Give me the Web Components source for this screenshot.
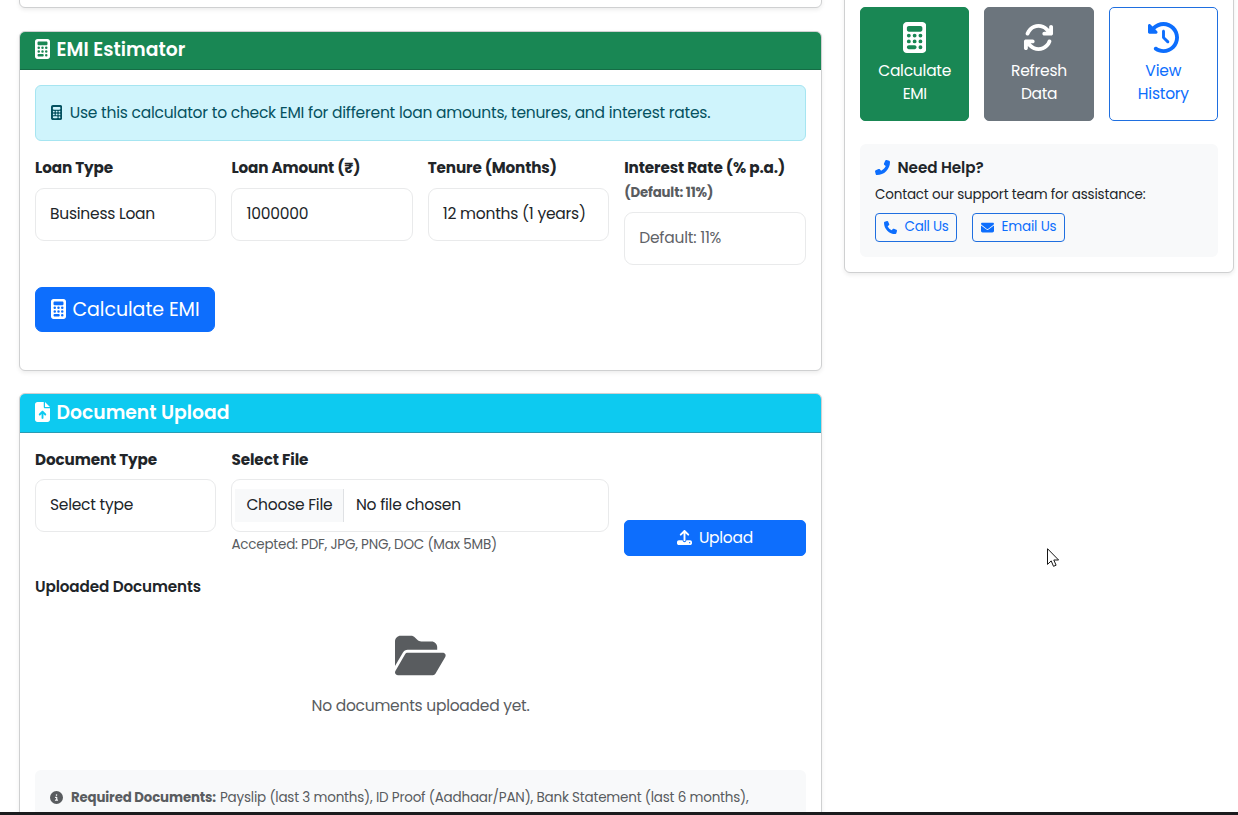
<!DOCTYPE html>
<html lang="en">
<head>
<meta charset="utf-8">
<title>Loan dashboard</title>
<style>
html,body{margin:0;height:815px;overflow:hidden;background:#fff}
body{font-family:Poppins,Inter,"Noto Sans",sans-serif;font-size:15.5px;color:#212529}
</style>
</head>
<body>
<loan-dashboard></loan-dashboard>
<script>
const ICONS={
calc:[384,'M64 0C28.7 0 0 28.7 0 64V448c0 35.3 28.7 64 64 64H320c35.3 0 64-28.7 64-64V64c0-35.3-28.7-64-64-64H64zM96 64H288c17.7 0 32 14.3 32 32v32c0 17.7-14.3 32-32 32H96c-17.7 0-32-14.3-32-32V96c0-17.7 14.3-32 32-32zm32 160a32 32 0 1 1 -64 0 32 32 0 1 1 64 0zM96 352a32 32 0 1 1 0-64 32 32 0 1 1 0 64zM64 416c0-17.7 14.3-32 32-32h96c17.7 0 32 14.3 32 32s-14.3 32-32 32H96c-17.7 0-32-14.3-32-32zM192 256a32 32 0 1 1 0-64 32 32 0 1 1 0 64zm32 64a32 32 0 1 1 -64 0 32 32 0 1 1 64 0zm64-64a32 32 0 1 1 0-64 32 32 0 1 1 0 64zm32 64a32 32 0 1 1 -64 0 32 32 0 1 1 64 0zM288 448a32 32 0 1 1 0-64 32 32 0 1 1 0 64z'],
refresh:[512,'M105.1 202.6c7.7-21.8 20.2-42.3 37.8-59.8c62.5-62.5 163.8-62.5 226.3 0L386.3 160H352c-17.7 0-32 14.3-32 32s14.3 32 32 32H463.5h.4c17.7 0 32-14.3 32-32V80c0-17.7-14.3-32-32-32s-32 14.3-32 32v35.2L414.4 97.6c-87.5-87.5-229.3-87.5-316.8 0C73.2 122 55.6 150.7 44.8 181.4c-5.9 16.7 2.9 34.9 19.5 40.8s34.9-2.9 40.8-19.5zM39 289.3c-5 1.5-9.8 4.2-13.7 8.2c-4 4-6.7 8.8-8.1 14c-.3 1.2-.6 2.5-.8 3.8c-.3 1.7-.4 3.4-.4 5.1V432c0 17.7 14.3 32 32 32s32-14.3 32-32V396.9l17.6 17.5 0 0c87.5 87.4 229.3 87.4 316.7 0c24.4-24.4 42.1-53.1 52.9-83.7c5.9-16.7-2.9-34.9-19.5-40.8s-34.9 2.9-40.8 19.5c-7.7 21.8-20.2 42.3-37.8 59.8c-62.5 62.5-163.8 62.5-226.3 0l-.1-.1L125.6 352H160c17.7 0 32-14.3 32-32s-14.3-32-32-32H48.4c-1.6 0-3.2 .1-4.8 .3s-3.1 .5-4.6 1z'],
history:[512,'M75 75L41 41C25.9 25.9 0 36.6 0 57.9V168c0 13.3 10.7 24 24 24H134.1c21.4 0 32.1-25.9 17-41l-30.8-30.8C155 85.5 203 64 256 64c106 0 192 86 192 192s-86 192-192 192c-40.8 0-78.6-12.7-109.7-34.4c-14.5-10.1-34.4-6.6-44.6 7.9s-6.6 34.4 7.9 44.6C151.2 495 201.7 512 256 512c141.4 0 256-114.6 256-256S397.4 0 256 0C185.3 0 121.3 28.7 75 75zm181 53c-13.3 0-24 10.7-24 24V256c0 6.4 2.5 12.5 7 17l72 72c9.4 9.4 24.6 9.4 33.9 0s9.4-24.6 0-33.9l-65-65V152c0-13.3-10.7-24-24-24z'],
mail:[512,'M48 64C21.5 64 0 85.5 0 112c0 15.1 7.1 29.3 19.2 38.4L236.8 313.6c11.4 8.5 27 8.5 38.4 0L492.8 150.4c12.1-9.1 19.2-23.3 19.2-38.4c0-26.5-21.5-48-48-48H48zM0 176V384c0 35.3 28.7 64 64 64H448c35.3 0 64-28.7 64-64V176L294.4 339.2c-22.8 17.1-54 17.1-76.8 0L0 176z'],
phone:[512,'M164.9 24.6c-7.7-18.6-28-28.5-47.4-23.2l-88 24C12.1 30.2 0 46 0 64C0 311.4 200.6 512 448 512c18 0 33.8-12.1 38.6-29.5l24-88c5.3-19.4-4.6-39.7-23.2-47.4l-96-40c-16.3-6.8-35.2-2.1-46.3 11.6L304.7 368C234.3 334.7 177.3 277.7 144 207.3L193.3 167c13.7-11.2 18.4-30 11.6-46.3l-40-96z'],
file:[384,'M64 0C28.7 0 0 28.7 0 64V448c0 35.3 28.7 64 64 64H320c35.3 0 64-28.7 64-64V160H256c-17.7 0-32-14.3-32-32V0H64zM256 0V128H384L256 0zM216 408c0 13.3-10.7 24-24 24s-24-10.7-24-24V305.9l-31 31c-9.4 9.4-24.6 9.4-33.9 0s-9.4-24.6 0-33.9l72-72c9.4-9.4 24.6-9.4 33.9 0l72 72c9.4 9.4 9.4 24.6 0 33.9s-24.6 9.4-33.9 0l-31-31V408z'],
upload:[512,'M288 109.3V352c0 17.7-14.3 32-32 32s-32-14.3-32-32V109.3l-73.4 73.4c-12.5 12.5-32.8 12.5-45.3 0s-12.5-32.8 0-45.3l128-128c12.5-12.5 32.8-12.5 45.3 0l128 128c12.5 12.5 12.5 32.8 0 45.3s-32.8 12.5-45.3 0L288 109.3zM64 352H192c0 35.3 28.7 64 64 64s64-28.7 64-64H448c35.3 0 64 28.7 64 64v32c0 35.3-28.7 64-64 64H64c-35.3 0-64-28.7-64-64V416c0-35.3 28.7-64 64-64zM432 456a24 24 0 1 0 0-48 24 24 0 1 0 0 48z'],
info:[512,'M256 512A256 256 0 1 0 256 0a256 256 0 1 0 0 512zM216 336h24V272H216c-13.3 0-24-10.7-24-24s10.7-24 24-24h48c13.3 0 24 10.7 24 24v88h8c13.3 0 24 10.7 24 24s-10.7 24-24 24H216c-13.3 0-24-10.7-24-24s10.7-24 24-24zm40-208a32 32 0 1 1 0 64 32 32 0 1 1 0-64z'],
folder:[576,'M88.7 223.8L0 375.8V96C0 60.7 28.7 32 64 32H181.5c17 0 33.3 6.7 45.3 18.7l26.5 26.5c12 12 28.3 18.7 45.3 18.7H416c35.3 0 64 28.7 64 64v32H144c-22.8 0-43.8 12.1-55.3 31.8zm27.6 16.1C122.1 230 132.6 224 144 224H544c11.5 0 22 6.1 27.7 16.1s5.7 22.2-.1 32.1l-112 192C453.9 474 443.4 480 432 480H32c-11.5 0-22-6.1-27.7-16.1s-5.7-22.2 .1-32.1l112-192z']
};
const def=(name,html,init)=>customElements.define(name,class extends HTMLElement{
  connectedCallback(){
    if(this.shadowRoot)return;
    this.attachShadow({mode:'open'}).innerHTML=typeof html==='function'?html(this):html;
    if(init)init(this);
  }
});
const at=(e,n,d='')=>e.getAttribute(n)??d;

/* Icon: name, size (height in px), optional flip */
def('ui-icon',e=>{const [w,d]=ICONS[at(e,'name')],s=+at(e,'size',16);
  return `<style>:host{display:block;flex:none;line-height:0}svg{display:block;fill:currentColor}:host([flip]) svg{transform:scaleX(-1)}</style><svg width="${s*w/512}" height="${s}" viewBox="0 0 ${w} 512"><path d="${d}"/></svg>`;});

/* Single line of text, tracked so that it fills the width w */
def('ui-text','<style>:host{display:block;flex:none;white-space:nowrap}span{display:inline-block}</style><span><slot></slot></span>',e=>{
  const w=+at(e,'w',0);if(!w)return;
  const s=e.shadowRoot.querySelector('span'),n=e.textContent.length;
  s.style.letterSpacing=(w-s.getBoundingClientRect().width)/n+'px';
  e.style.width=w+'px';
});

def('ui-card',`<style>
:host{display:block;box-sizing:border-box;border:1px solid #cfd0d1;border-radius:6px;background:#fff;box-shadow:0 2px 4px rgba(0,0,0,.075)}
header{display:flex;align-items:center;box-sizing:border-box;height:var(--hh,38px);padding:0 15px 2px;gap:6.5px;background:var(--head);color:#fff;font-size:18.75px;font-weight:600;border-radius:5px 5px 0 0;border-bottom:1px solid var(--line)}
header ::slotted(ui-icon){margin-bottom:1px}
:host([plain]) header{display:none}
.body{padding:var(--pad,15px)}
</style><header><slot name="head"></slot></header><div class="body"><slot></slot></div>`);

def('ui-field',`<style>
:host{display:block}
.label{font-size:15.2px;font-weight:700;height:24px;line-height:24px}
.hint{display:block;font-weight:700;font-size:13.3px;color:#595c5f}
.hint ::slotted(*){line-height:22px;padding-top:2px}
.box{display:flex;align-items:center;box-sizing:border-box;height:53px;margin-top:var(--gap,8px);padding:0 14px 2px;border:1px solid #e9eaeb;border-radius:9px}
:host([muted]) .box{color:#5f6368}
</style><div class="label"><slot name="label"></slot></div><div class="hint"><slot name="hint"></slot></div><div class="box"><slot></slot></div>`);

def('ui-button',`<style>
:host{display:flex;align-items:center;justify-content:center;box-sizing:border-box;background:var(--bg,#0d6efd);color:var(--fg,#fff);border:1px solid var(--bd,var(--bg,#0d6efd));border-radius:var(--r,5px);gap:7px}
:host([tile]){flex-direction:column;justify-content:flex-start;gap:0;height:114px;padding-top:14px;line-height:23px}
:host([tile]) ::slotted(ui-icon){margin-bottom:6px}
:host([small]){height:29px;font-size:13.5px;gap:8px;--bg:transparent;--fg:#0d6efd;--bd:#1f6fe0;--r:4px;padding-bottom:1px}
</style><slot></slot>`);

def('emi-card',`<style>
:host{display:block}
ui-card{height:340px;--head:#198754;--line:#156c45}
.alert{display:flex;align-items:center;gap:7.5px;box-sizing:border-box;height:56px;padding:0 15px 1px;background:#cff4fc;border:1px solid #a6e5f1;border-radius:6px;color:#055160}
.grid{display:grid;grid-template-columns:repeat(4,181.4px);gap:15px;margin-top:15px;align-items:start}
ui-button{width:180px;height:45px;margin-top:22px;font-size:19px;--r:7px;padding-bottom:1px}
</style>
<ui-card>
<ui-icon slot="head" name="calc" size="20"></ui-icon><ui-text slot="head" w="129">EMI Estimator</ui-text>
<div class="alert"><ui-icon name="calc" size="15"></ui-icon><ui-text w="640.5">Use this calculator to check EMI for different loan amounts, tenures, and interest rates.</ui-text></div>
<div class="grid">
<ui-field><ui-text slot="label" w="78">Loan Type</ui-text><ui-text w="105">Business Loan</ui-text></ui-field>
<ui-field><ui-text slot="label" w="129">Loan Amount (₹)</ui-text><ui-text w="62">1000000</ui-text></ui-field>
<ui-field><ui-text slot="label" w="129">Tenure (Months)</ui-text><ui-text w="143">12 months (1 years)</ui-text></ui-field>
<ui-field muted><ui-text slot="label" w="161">Interest Rate (% p.a.)</ui-text><ui-text slot="hint" w="89">(Default: 11%)</ui-text><ui-text w="82">Default: 11%</ui-text></ui-field>
</div>
<ui-button><ui-icon name="calc" size="20"></ui-icon><ui-text w="127">Calculate EMI</ui-text></ui-button>
</ui-card>`);

def('document-card',`<style>
:host{display:block}
ui-card{height:480px;--head:#0dcaf0;--line:#2a9bb3;--hh:39px}
.grid{display:grid;grid-template-columns:181.4px 377.8px 181.4px;gap:15px;align-items:end}
ui-field{--gap:7px;align-self:start}
.choose{display:flex;align-items:center;box-sizing:border-box;height:33px;padding:0 11px 2px;background:#f8f9fa;border-right:1px solid #dfe1e4;margin:1px 11.5px 0 -11px}
.note{font-size:13.5px;line-height:22px;padding-top:2px;color:#595c5f}
.upload{height:36px;padding-bottom:1px}
h6{margin:19px 0 0;font-size:15.2px;font-weight:600;line-height:24px}
.empty{display:flex;flex-direction:column;align-items:center;margin-top:34px;color:#595c5f}
.empty ui-text{line-height:24px;margin-top:15px}
.req{display:flex;gap:8px;align-items:center;box-sizing:border-box;height:80px;margin-top:52px;padding:0 15px 25px;background:#f8f9fa;border-radius:6px;color:#595c5f;font-size:13.5px}
.req ui-text+ui-text{margin-left:-4px}
</style>
<ui-card>
<ui-icon slot="head" name="file" size="20"></ui-icon><ui-text slot="head" w="173">Document Upload</ui-text>
<div class="grid">
<ui-field><ui-text slot="label" w="122">Document Type</ui-text><ui-text w="83">Select type</ui-text></ui-field>
<div><ui-field><ui-text slot="label" w="77">Select File</ui-text><div class="choose"><ui-text w="86">Choose File</ui-text></div><ui-text w="105">No file chosen</ui-text></ui-field>
<div class="note"><ui-text w="265.5">Accepted: PDF, JPG, PNG, DOC (Max 5MB)</ui-text></div></div>
<ui-button class="upload"><ui-icon name="upload" size="15"></ui-icon><ui-text w="54">Upload</ui-text></ui-button>
</div>
<h6><ui-text w="166">Uploaded Documents</ui-text></h6>
<div class="empty"><ui-icon name="folder" size="45"></ui-icon><ui-text w="218" style="margin-top:16px">No documents uploaded yet.</ui-text></div>
<div class="req"><ui-icon name="info" size="13"></ui-icon><ui-text w="145" style="font-weight:700;font-size:13.3px">Required Documents:</ui-text><ui-text w="528.5">Payslip (last 3 months), ID Proof (Aadhaar/PAN), Bank Statement (last 6 months),</ui-text></div>
</ui-card>`);

def('actions-card',`<style>
:host{display:block}
ui-card{height:281px;--pad:14px 15px}
.tiles{display:grid;grid-template-columns:repeat(3,1fr);gap:15px}
.help{box-sizing:border-box;height:113px;margin-top:23px;padding:12px 15px;background:#f8f9fa;border-radius:6px}
.title{display:flex;align-items:center;gap:7.5px;height:23px;font-size:15.2px;font-weight:600}
.title ui-icon{color:#0d6efd}
.copy{font-size:13.5px;line-height:22px;margin-top:5px}
.row{display:flex;gap:15px;margin-top:7px}
</style>
<ui-card plain>
<div class="tiles">
<ui-button tile style="--bg:#198754"><ui-icon name="calc" size="31"></ui-icon><ui-text w="73">Calculate</ui-text><ui-text w="24">EMI</ui-text></ui-button>
<ui-button tile style="--bg:#6c757d"><ui-icon name="refresh" size="31"></ui-icon><ui-text w="56">Refresh</ui-text><ui-text w="36">Data</ui-text></ui-button>
<ui-button tile style="--bg:#fff;--fg:#0d6efd;--bd:#1f6fe0"><ui-icon name="history" size="31"></ui-icon><ui-text w="36">View</ui-text><ui-text w="51">History</ui-text></ui-button>
</div>
<div class="help">
<div class="title"><ui-icon name="phone" flip size="15"></ui-icon><ui-text w="86">Need Help?</ui-text></div>
<div class="copy"><ui-text w="270.5">Contact our support team for assistance:</ui-text></div>
<div class="row">
<ui-button small style="width:82px"><ui-icon name="phone" size="13"></ui-icon><ui-text w="44">Call Us</ui-text></ui-button>
<ui-button small style="width:93px"><ui-icon name="mail" size="13"></ui-icon><ui-text w="55">Email Us</ui-text></ui-button>
</div></div>
</ui-card>`);

/* Pointer resting on the empty part of the page */
def('mouse-pointer',`<style>:host{position:absolute;left:1047px;top:548px;z-index:5}svg{display:block}</style>
<svg width="13" height="20" viewBox="0 0 13 20"><path d="M.5 .7V16.4L4.2 12.9L6.5 18.3L9.1 17.2L6.8 12H11.6Z" fill="#fff" stroke="#161616"/></svg>`);

def('loan-dashboard',`<style>
:host{display:flex;flex-direction:column;height:815px;overflow:hidden}
main{flex:1;min-height:0;overflow:hidden;display:grid;grid-template-columns:803px 390px;gap:22px;padding-left:19px}
.stub{height:28px;margin-top:-20px}
emi-card{margin-top:23px}
document-card{margin-top:22px}
actions-card{margin-top:-8px}
footer{flex:none;height:3px;background:#1b1c1e}
</style>
<main>
<section><ui-card plain class="stub" style="--pad:0"></ui-card><emi-card></emi-card><document-card></document-card></section>
<aside><actions-card></actions-card></aside>
</main>
<footer></footer>
<mouse-pointer></mouse-pointer>`);
</script>
</body>
</html>
